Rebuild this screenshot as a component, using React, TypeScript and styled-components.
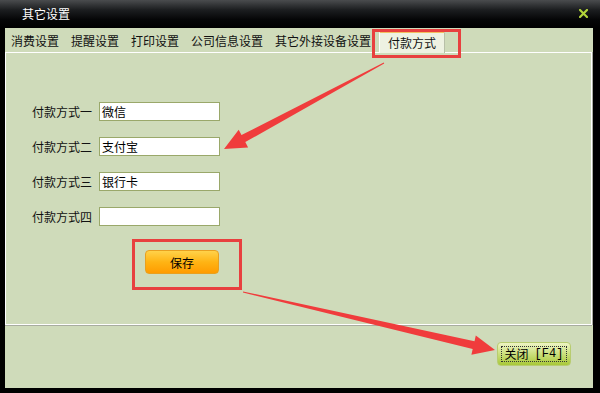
import styled, { createGlobalStyle } from "styled-components"

const GlobalStyle = createGlobalStyle`
  html, body {
    margin: 0;
    padding: 0;
    background: #000000;
  }
  body {
    font-family: "Noto Sans CJK SC", "DejaVu Sans", sans-serif;
    font-size: 12px;
  }
`

const Window = styled.div`
  position: relative;
  width: 600px;
  height: 393px;
  display: flex;
  flex-direction: column;
  overflow: hidden;
`
const TitleBar = styled.div`
  height: 28px;
  flex: none;
  display: flex;
  align-items: center;
  padding: 0 12px 0 22px;
  background: linear-gradient(#4a4c4e 0%, #1c1e20 35%, #050607 70%, #000000 100%);
  color: #ffffff;
  font-size: 12px;
`
const Title = styled.span`
  flex: 1;
  line-height: 28px;
`
const CloseX = styled.svg`
  width: 9px;
  height: 9px;
  margin-top: -1px;
`
const Body = styled.div`
  flex: 1;
  min-height: 0;
  display: flex;
  flex-direction: column;
  background: #cfdbba;
  border-left: 5px solid #000;
  border-right: 7px solid #000;
  border-bottom: 5px solid #000;
`
const TabRow = styled.div`
  height: 24px;
  flex: none;
  display: flex;
  align-items: flex-end;
  color: #111;
`
const Tab = styled.div<{ $active?: boolean }>`
  height: ${p => (p.$active ? "20px" : "22px")};
  line-height: ${p => (p.$active ? "20px" : "22px")};
  padding: 0 ${p => (p.$active ? "8px" : "6px")};
  margin-left: ${p => (p.$active ? "2px" : "0")};
  margin-bottom: ${p => (p.$active ? "-1px" : "0")};
  position: relative;
  white-space: nowrap;
  background: ${p => (p.$active ? "#eef2e2" : "transparent")};
  border-top: ${p => (p.$active ? "2px solid #f2c060" : "none")};
  border-left: ${p => (p.$active ? "1px solid #ffffff" : "none")};
  border-right: ${p => (p.$active ? "1px solid #b8c0a8" : "none")};
  border-radius: 2px 2px 0 0;
`
const Panel = styled.div`
  box-sizing: border-box;
  flex: none;
  height: 273px;
  margin-right: 1px;
  border: 1px solid #ffffff;
  box-shadow: 0 1px 0 #a8aca0, 1px 0 0 #a8aca0;
  padding: 49px 0 0 26px;
  display: flex;
  flex-direction: column;
`
const Form = styled.div`
  display: flex;
  flex-direction: column;
  gap: 16px;
`
const Row = styled.div`
  display: flex;
  align-items: center;
  height: 19px;
`
const Label = styled.span`
  width: 67px;
  color: #111;
  white-space: nowrap;
`
const Input = styled.div`
  box-sizing: border-box;
  width: 121px;
  height: 19px;
  background: #ffffff;
  border: 1px solid #9aa86a;
  padding: 0 2px;
  line-height: 17px;
  color: #000;
`
const SaveButton = styled.div`
  box-sizing: border-box;
  margin: 24px 0 0 113px;
  width: 74px;
  height: 24px;
  border-radius: 4px;
  border: 1px solid #e8a020;
  background: linear-gradient(#ffd24a 0%, #ffb414 50%, #ff9c00 100%);
  display: flex;
  align-items: center;
  justify-content: center;
  color: #000;
`
const Footer = styled.div`
  flex: 1;
  display: flex;
  justify-content: flex-end;
  align-items: flex-start;
  padding: 17px 22px 0 0;
`
const CloseButton = styled.div`
  box-sizing: border-box;
  width: 74px;
  height: 24px;
  border-radius: 4px;
  border: 1px solid #b8cc70;
  background: linear-gradient(#eef4c4 0%, #cadf7c 50%, #a8c838 100%);
  padding: 3px;
  display: flex;
`
const CloseInner = styled.div`
  flex: 1;
  border: 1px dotted #333;
  display: flex;
  align-items: center;
  justify-content: center;
  font-family: "Liberation Mono", "Noto Sans CJK SC", monospace;
  font-size: 12px;
  color: #000;
  white-space: nowrap;
  gap: 6px;
`
const Overlay = styled.svg`
  position: absolute;
  left: 0;
  top: 0;
  width: 600px;
  height: 393px;
  pointer-events: none;
`

const methods = [
  { label: "付款方式一", value: "微信" },
  { label: "付款方式二", value: "支付宝" },
  { label: "付款方式三", value: "银行卡" },
  { label: "付款方式四", value: "" },
]

const tabs = ["消费设置", "提醒设置", "打印设置", "公司信息设置", "其它外接设备设置", "付款方式"]

const App = () => {
  return (
    <Window>
      <GlobalStyle />
      <TitleBar>
        <Title>其它设置</Title>
        <CloseX viewBox="0 0 9 9">
          <path d="M1 1 L8 8 M8 1 L1 8" stroke="#b2d43a" strokeWidth="2.2" strokeLinecap="square" />
        </CloseX>
      </TitleBar>
      <Body>
        <TabRow>
          {tabs.map((t, i) => (
            <Tab key={t} $active={i === tabs.length - 1}>{t}</Tab>
          ))}
        </TabRow>
        <Panel>
          <Form>
            {methods.map(m => (
              <Row key={m.label}>
                <Label>{m.label}</Label>
                <Input>{m.value}</Input>
              </Row>
            ))}
          </Form>
          <SaveButton>保存</SaveButton>
        </Panel>
        <Footer>
          <CloseButton>
            <CloseInner>
              <span>关闭</span>
              <span>[F4]</span>
            </CloseInner>
          </CloseButton>
        </Footer>
      </Body>
      <Overlay viewBox="0 0 600 393">
        <rect x="373.5" y="30.5" width="86" height="26" fill="none" stroke="#e8403f" strokeWidth="3" />
        <rect x="133.5" y="240.5" width="107" height="48" fill="none" stroke="#e8403f" strokeWidth="3" />
        <polygon
          points="383.8,62.6 241.5,135.1 238.7,129.8 224,149 248.1,147.4 245.3,142.1 384.2,63.4"
          fill="#f03c3c"
        />
        <polygon
          points="243.1,291.5 474.5,341.2 475.8,335.4 495,350 471.4,354.8 472.7,349 242.9,292.5"
          fill="#f03c3c"
        />
      </Overlay>
    </Window>
  )
}

export default App
